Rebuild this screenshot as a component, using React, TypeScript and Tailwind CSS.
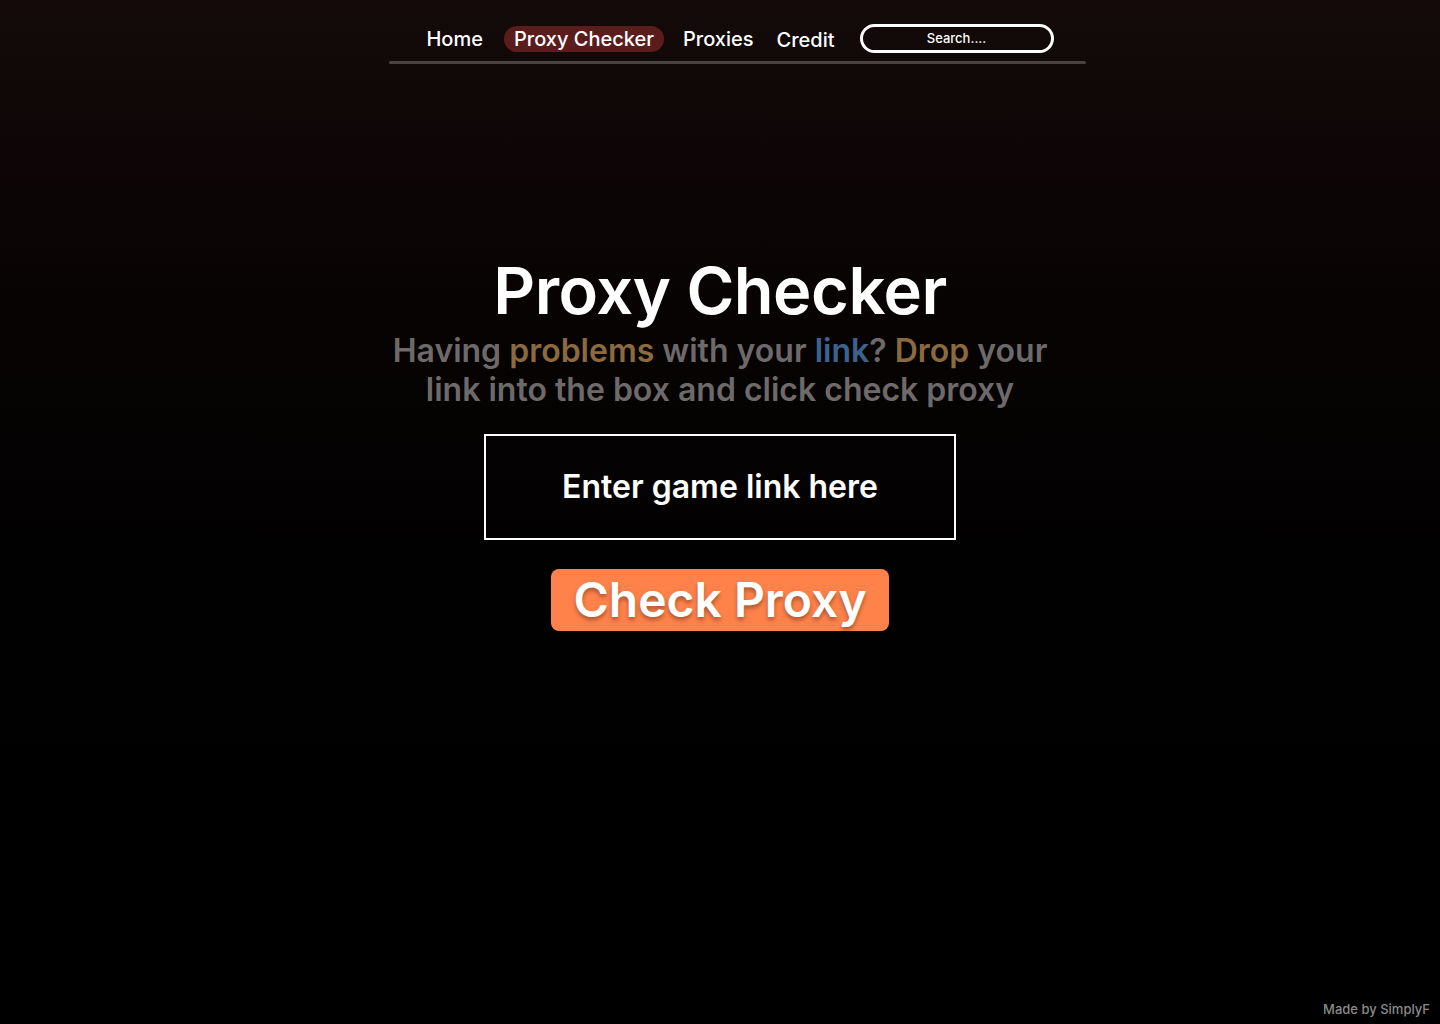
import React from "react";

export default function App() {
  return (
    <div
      className="relative w-full h-[1024px] overflow-hidden bg-gradient-to-b from-[#140a0a] to-[#000000] text-white"
      style={{ fontFamily: "Inter, 'Noto Sans', sans-serif" }}
    >
      <nav className="flex flex-col items-center pt-[24px]">
        <div className="flex items-center h-[29px] ml-[2px]">
          <a className="ml-[38px] text-[20px] font-medium leading-none">Home</a>
          <a className="ml-[21px] px-[10px] h-[26px] flex items-center rounded-full bg-[#5b1c1c] text-[20px] font-medium leading-none">
            Proxy Checker
          </a>
          <a className="ml-[19px] text-[20px] font-medium leading-none">Proxies</a>
          <a className="ml-[23px] text-[20px] font-medium leading-none mt-[2px]">Credit</a>
          <div className="ml-[25px] w-[194px] h-[29px] rounded-full border-[3px] border-white flex items-center justify-center text-[13px] font-medium">
            Search....
          </div>
        </div>
        <div className="mt-[8px] ml-[35px] w-[697px] h-[3px] rounded-full bg-[#4a4242]" />
      </nav>

      <main className="flex flex-col items-center pt-[188px]">
        <h1 className="text-[65px] font-semibold leading-[1.2] tracking-[-0.5px]">Proxy Checker</h1>
        <p className="mt-[1px] w-[680px] text-center text-[32px] font-semibold leading-[39px] text-[#6e6a6a]">
          Having <span className="text-[#8a6a3e]">problems</span> with your{" "}
          <span className="text-[#3c6390]">link</span>? <span className="text-[#8a6a3e]">Drop</span> your link into
          the box and click check proxy
        </p>
        <div className="mt-[25px] w-[472px] h-[106px] border-2 border-white flex items-center justify-center text-[32px] font-semibold">
          Enter game link here
        </div>
        <button className="mt-[29px] w-[338px] h-[62px] rounded-[8px] bg-[#ff824a] text-[48px] font-semibold leading-none text-white [text-shadow:0_3px_4px_rgba(0,0,0,0.35)]">
          Check Proxy
        </button>
      </main>

      <div className="absolute right-[10px] bottom-[5px] text-[13px] font-medium text-[#8a8a8a]">Made by SimplyF</div>
    </div>
  );
}
